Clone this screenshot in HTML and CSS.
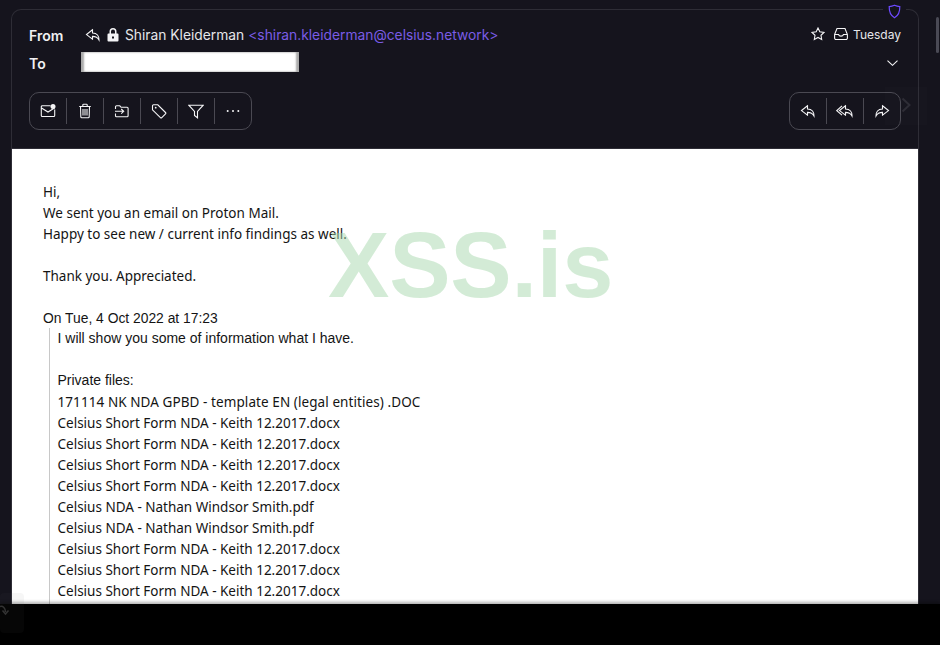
FILE: index.html
```html
<!DOCTYPE html>
<html lang="en">
<head>
<meta charset="utf-8">
<title>Message</title>
<link rel="stylesheet" href="styles.css">
</head>
<body>
<div class="screen">
  <main class="message">
    <header class="head">
      <div class="row row-from">
        <span class="label">From</span>
        <svg class="ic reply-ic" viewBox="0 0 16 16"><path d="M7.500 2.800 1.500 7.600l6 4.600V9.400c3 0 5 .8 6.500 3.600.2-4.200-2-6.800-6.500-7z"/></svg>
        <svg class="ic lock" viewBox="0 0 14 16"><path class="fill" d="M3.500 6.500V4.500a3.500 3.500 0 0 1 7 0v2h1a1 1 0 0 1 1 1v6a1 1 0 0 1-1 1h-9a1 1 0 0 1-1-1v-6a1 1 0 0 1 1-1zm1.500 0h4V4.500a2 2 0 0 0-4 0zM6 9.500v2h2v-2z"/></svg>
        <span class="name">Shiran Kleiderman</span>
        <span class="addr">&lt;shiran.kleiderman@celsius.network&gt;</span>
        <span class="spacer"></span>
        <svg class="ic star" viewBox="0 0 14 14"><path d="m7 1 1.800 3.800 4.200.6-3 2.900.7 4.200L7 10.500l-3.700 2 .7-4.200-3-2.900 4.200-.6z"/></svg>
        <svg class="ic inbox" viewBox="0 0 14 14"><path d="M.6 7.500 3 1.500h8l2.400 6v3.500a1.500 1.500 0 0 1-1.500 1.500H2.100A1.500 1.500 0 0 1 .6 11zm0 0h3.900c.4 1.100 1.300 1.600 2.500 1.600s2.100-.5 2.500-1.600h3.900"/></svg>
        <span class="date">Tuesday</span>
      </div>
      <div class="row row-to">
        <span class="label">To</span>
        <span class="redacted"></span>
        <span class="spacer"></span>
        <svg class="ic chevron" viewBox="0 0 11 6"><path d="m.5.700 5 4.600 5-4.600"/></svg>
      </div>
      <div class="toolbar-row">
        <div class="group">
          <button class="tool"><svg class="ic" viewBox="0 0 16 16"><path d="M10.500 2.700H2.300a1 1 0 0 0-1 1v8.800a1 1 0 0 0 1 1h11.400a1 1 0 0 0 1-1V6.500M1.500 5 8 9l6.500-4"/><circle class="fill" cx="13" cy="3.500" r="2.500"/></svg></button>
          <button class="tool"><svg class="ic" viewBox="0 0 16 16"><path d="M2.200 3.500h11.600M5.800 3.500V2a.8.8 0 0 1 .8-.8h2.800a.8.8 0 0 1 .8.800v1.500M3.500 3.500l.3 10.300a1 1 0 0 0 1 1h6.400a1 1 0 0 0 1-1l.3-10.300M6 6v6.500M8 6v6.500M10 6v6.500"/></svg></button>
          <button class="tool"><svg class="ic" viewBox="0 0 16 16"><path d="M1.500 6V3.800a1 1 0 0 1 1-1h3.300l1.300 1.500h6a1 1 0 0 1 1 1v7.400a1 1 0 0 1-1 1H2.500a1 1 0 0 1-1-1V10.500M1 8.300h8.500M7.200 6l2.500 2.300-2.500 2.300"/></svg></button>
          <button class="tool"><svg class="ic" viewBox="0 0 16 16"><path d="M1.500 2.800a1 1 0 0 1 1-1h4.300L14.500 9.500a1 1 0 0 1 0 1.400l-3.700 3.700a1 1 0 0 1-1.400 0L1.500 6.800z"/><circle class="fill" cx="4.700" cy="4.700" r=".9"/></svg></button>
          <button class="tool"><svg class="ic" viewBox="0 0 16 16"><path d="M.8 2.200h14.400L9.500 8.500v6.300L6.500 12.500v-4z"/></svg></button>
          <button class="tool"><svg class="ic" viewBox="0 0 16 16"><circle class="fill" cx="2.700" cy="8" r="1"/><circle class="fill" cx="8" cy="8" r="1"/><circle class="fill" cx="13.300" cy="8" r="1"/></svg></button>
        </div>
        <span class="spacer"></span>
        <div class="group">
          <button class="tool"><svg class="ic" viewBox="0 0 16 16"><path d="M7.500 2.800 1.500 7.600l6 4.600V9.400c3 0 5 .8 6.500 3.600.2-4.200-2-6.800-6.500-7z"/></svg></button>
          <button class="tool"><svg class="ic ic-wide" viewBox="0 0 18 16"><path d="M9.500 2.800 3.500 7.600l6 4.600V9.400c3 0 5 .8 6.500 3.600.2-4.200-2-6.800-6.500-7zM6 2.800.8 7.600 6 12.200"/></svg></button>
          <button class="tool"><svg class="ic" viewBox="0 0 16 16"><path d="M8.500 2.800l6 4.800-6 4.600V9.400c-3 0-5 .8-6.500 3.600-.2-4.200 2-6.800 6.500-7z"/></svg></button>
        </div>
      </div>
    </header>
    <article class="mail">
      <p>Hi,</p>
      <p>We sent you an email on Proton Mail.</p>
      <p>Happy to see new / current info findings as well.</p>
      <p>&nbsp;</p>
      <p>Thank you. Appreciated.</p>
      <p>&nbsp;</p>
      <p class="arial">On Tue, 4 Oct 2022 at 17:23</p>
      <blockquote class="quote">
        <p class="arial">I will show you some of information what I have.</p>
        <p>&nbsp;</p>
        <p class="arial private">Private files:</p>
        <p class="caps">171114 NK NDA GPBD - template EN (legal entities) .DOC</p>
        <p>Celsius Short Form NDA - Keith 12.2017.docx</p>
        <p>Celsius Short Form NDA - Keith 12.2017.docx</p>
        <p>Celsius Short Form NDA - Keith 12.2017.docx</p>
        <p>Celsius Short Form NDA - Keith 12.2017.docx</p>
        <p>Celsius NDA - Nathan Windsor Smith.pdf</p>
        <p>Celsius NDA - Nathan Windsor Smith.pdf</p>
        <p>Celsius Short Form NDA - Keith 12.2017.docx</p>
        <p>Celsius Short Form NDA - Keith 12.2017.docx</p>
        <p>Celsius Short Form NDA - Keith 12.2017.docx</p>
        <p>Celsius Short Form NDA - Keith 12.2017.docx</p>
      </blockquote>
    </article>
  </main>
  <aside class="scroll"><span class="thumb"></span></aside>
  <svg class="shield" viewBox="0 0 14 16"><path d="M7 1.300c2 .9 3.800 1.300 5.700 1.400.2 5.600-1.500 9.800-5.700 12-4.200-2.200-5.900-6.400-5.700-12C3.200 2.600 5 2.200 7 1.300z"/></svg>
  <span class="watermark">XSS.is</span>
  <span class="patch-next"></span>
  <svg class="next" viewBox="0 0 10 16"><path d="m1.500 1.500 7 6.500-7 6.500"/></svg>
  <footer class="blackbar"></footer>
  <div class="patch-redo"><svg class="redo" viewBox="0 0 10 14"><path d="M0 1.500c3-.8 5.500 1.500 5.500 5.500M2.500 5.500l3 3.500 3-3.500"/></svg></div>
</div>
</body>
</html>
```
FILE: styles.css
```css
* { box-sizing: border-box; }
html, body { margin: 0; padding: 0; }
body { width: 940px; height: 645px; overflow: hidden; background: #15141d; }
.screen { position: relative; width: 940px; height: 645px; overflow: hidden; display: flex; padding: 9px 0 0 11px; }
.message { width: 908px; height: 636px; display: flex; flex-direction: column; border: 1px solid #2e2d36; border-bottom: 0; border-radius: 10px 10px 0 0; overflow: hidden; }
.head { flex: none; height: 139px; padding: 13px 17px 0 17px; border-bottom: 1px solid #2e2d36; font-family: Inter, sans-serif; color: #fff; }
.row { display: flex; align-items: center; }
.row-from { height: 24px; }
.row-to { height: 24px; margin-top: 4px; }
.label { width: 56px; font-size: 14px; font-weight: 600; color: #f0f0f2; }
.spacer { flex: 1; }
.ic { width: 16px; height: 16px; fill: none; stroke: #f4f4f6; stroke-width: 1.100; display: block; }
.ic .fill { fill: #f4f4f6; stroke: none; }
.reply-ic { margin-right: 5px; }
.lock { width: 14px; margin-right: 5px; stroke: none; }
.name { font-size: 13.8px; color: #e6e6ea; }
.addr { font-size: 13.8px; color: #7a5ce6; margin-left: 4px; }
.star { width: 14px; height: 14px; margin: 0 9px 2px 0; }
.inbox { width: 14px; height: 14px; margin: 0 5px 2px 0; }
.date { font-size: 12px; color: #e6e6ea; margin: 0 0 2px 0; }
.redacted { width: 218px; height: 20px; margin: 0 0 2px -4px; background: #fff; box-shadow: inset 3px 0 2px #aaa, inset -3px 0 2px #aaa; filter: blur(.5px); }
.chevron { width: 11px; height: 6px; margin: 0 3px 0 0; }
.toolbar-row { display: flex; margin-top: 17px; }
.group { display: flex; align-items: center; height: 38px; border: 1px solid #4a4952; border-radius: 10px; }
.tool { width: 37px; height: 26px; padding: 0; background: transparent; border: 0; border-right: 1px solid #4a4952; display: flex; align-items: center; justify-content: center; }
.tool:last-child { border-right: 0; width: 36px; }
.ic-wide { width: 18px; }
.mail { flex: 1; background: #fff; padding: 33px 0 0 31px; font-family: "Noto Sans", sans-serif; font-size: 13.5px; line-height: 21px; color: #141414; overflow: hidden; }
.mail p { margin: 0; height: 21px; white-space: nowrap; }
.mail .arial { font-family: "Liberation Sans", sans-serif; font-size: 14px; }
.mail > .arial { font-size: 13.850px; }
.mail .private { margin-bottom: 1px; }
.mail .caps { letter-spacing: .08px; }
.quote { margin: -1px 0 0 6px; padding-left: 7.500px; border-left: 1px solid #c8c8c8; }
.scroll { position: absolute; top: 0; right: 0; width: 21px; height: 100%; }
.thumb { position: absolute; top: 17px; right: 1px; width: 3px; height: 36px; border-radius: 2px; background: #4a4a55; }
.shield { position: absolute; top: 4px; left: 883px; width: 23px; height: 15px; padding: 0 5px; background: #15141d; fill: #15141d; stroke: #6d4aff; stroke-width: 1.300; }
.watermark { position: absolute; left: 328px; top: 215px; font-family: "Liberation Sans", sans-serif; font-weight: 700; font-size: 92px; line-height: 100px; letter-spacing: -.2px; color: #a9d9ae; opacity: .5; }
.patch-next { position: absolute; left: 885px; top: 87px; width: 42px; height: 38px; background: rgba(255,255,255,.01); }
.next { position: absolute; left: 901px; top: 97px; width: 10px; height: 16px; fill: none; stroke: #2e2d36; stroke-width: 2; }
.blackbar { position: absolute; left: 0; right: 0; bottom: 0; height: 41px; background: #000; box-shadow: 0 -2px 3px rgba(0,0,0,.3); }
.patch-redo { position: absolute; left: 0; top: 593px; width: 24px; height: 40px; border-radius: 4px; background: rgba(110,110,110,.06); }
.redo { position: absolute; left: 0; top: 12px; width: 10px; height: 14px; fill: none; stroke: #333; stroke-width: 1.500; }
```
